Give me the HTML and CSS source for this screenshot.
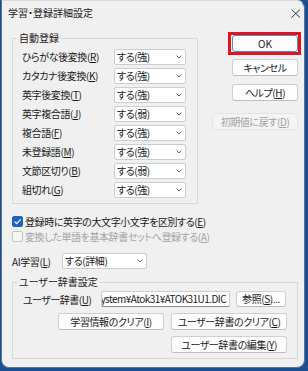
FILE: index.html
```html
<!DOCTYPE html>
<html lang="ja">
<head>
<meta charset="utf-8">
<title>学習・登録詳細設定</title>
<link rel="stylesheet" href="styles.css">
</head>
<body>
<div class="window">
  <div class="titlebar">
    <span class="title">学習・登録詳細設定</span>
    <svg class="close" width="10" height="9" viewBox="0 0 10 9"><path d="M0.5 0.5 L9 8.5 M9 0.5 L0.5 8.5" stroke="#333" stroke-width="1" fill="none"/></svg>
  </div>
  <div class="content">
    <div class="top">
      <fieldset class="group auto">
        <legend>自動登録</legend>
        <div class="rows">
          <span class="lbl">ひらがな後変換(<u>R</u>)</span>
          <div class="combo"><span>する(強)</span><svg width="6" height="4" viewBox="0 0 6 4"><path d="M0.5 0.5 L3 3 L5.5 0.5" stroke="#6a6a6a" fill="none"/></svg></div>
          <span class="lbl">カタカナ後変換(<u>K</u>)</span>
          <div class="combo"><span>する(強)</span><svg width="6" height="4" viewBox="0 0 6 4"><path d="M0.5 0.5 L3 3 L5.5 0.5" stroke="#6a6a6a" fill="none"/></svg></div>
          <span class="lbl">英字後変換(<u>T</u>)</span>
          <div class="combo"><span>する(強)</span><svg width="6" height="4" viewBox="0 0 6 4"><path d="M0.5 0.5 L3 3 L5.5 0.5" stroke="#6a6a6a" fill="none"/></svg></div>
          <span class="lbl">英字複合語(<u>J</u>)</span>
          <div class="combo"><span>する(弱)</span><svg width="6" height="4" viewBox="0 0 6 4"><path d="M0.5 0.5 L3 3 L5.5 0.5" stroke="#6a6a6a" fill="none"/></svg></div>
          <span class="lbl">複合語(<u>F</u>)</span>
          <div class="combo"><span>する(強)</span><svg width="6" height="4" viewBox="0 0 6 4"><path d="M0.5 0.5 L3 3 L5.5 0.5" stroke="#6a6a6a" fill="none"/></svg></div>
          <span class="lbl">未登録語(<u>M</u>)</span>
          <div class="combo"><span>する(強)</span><svg width="6" height="4" viewBox="0 0 6 4"><path d="M0.5 0.5 L3 3 L5.5 0.5" stroke="#6a6a6a" fill="none"/></svg></div>
          <span class="lbl">文節区切り(<u>B</u>)</span>
          <div class="combo"><span>する(弱)</span><svg width="6" height="4" viewBox="0 0 6 4"><path d="M0.5 0.5 L3 3 L5.5 0.5" stroke="#6a6a6a" fill="none"/></svg></div>
          <span class="lbl">組切れ(<u>G</u>)</span>
          <div class="combo"><span>する(強)</span><svg width="6" height="4" viewBox="0 0 6 4"><path d="M0.5 0.5 L3 3 L5.5 0.5" stroke="#6a6a6a" fill="none"/></svg></div>
        </div>
      </fieldset>
      <div class="side">
        <div class="btn default ok">OK</div>
        <div class="btn cancel">キャンセル</div>
        <div class="btn help">ヘルプ(<u>H</u>)</div>
        <div class="btn disabled init">初期値に戻す(<u>D</u>)</div>
      </div>
    </div>

    <div class="checks">
      <div class="check">
        <span class="box checked"><svg width="11" height="11" viewBox="0 0 11 11"><path d="M2.6 5.6 L4.6 7.6 L8.6 3.4" stroke="#fff" stroke-width="1.2" fill="none"/></svg></span>
        <span>登録時に英字の大文字小文字を区別する(<u>E</u>)</span>
      </div>
      <div class="check off">
        <span class="box"></span>
        <span>変換した単語を基本辞書セットへ登録する(<u>A</u>)</span>
      </div>
    </div>

    <div class="ai">
      <span class="ailbl">AI学習(<u>L</u>)</span>
      <div class="combo aicombo"><span>する(詳細)</span><svg width="6" height="4" viewBox="0 0 6 4"><path d="M0.5 0.5 L3 3 L5.5 0.5" stroke="#6a6a6a" fill="none"/></svg></div>
    </div>

    <fieldset class="group user">
      <legend>ユーザー辞書設定</legend>
      <div class="urows">
        <div class="urow">
          <span class="ulbl">ユーザー辞書(<u>U</u>)</span>
          <div class="field"><span>ystem¥Atok31¥ATOK31U1.DIC</span></div>
          <div class="btn ref">参照(<u>S</u>)...</div>
        </div>
        <div class="urow end">
          <div class="btn wide1">学習情報のクリア(<u>I</u>)</div>
          <div class="btn wide2">ユーザー辞書のクリア(<u>C</u>)</div>
        </div>
        <div class="urow end">
          <div class="btn wide2">ユーザー辞書の編集(<u>Y</u>)</div>
        </div>
      </div>
    </fieldset>
  </div>
</div>
</body>
</html>
```

FILE: styles.css
```css
* { box-sizing: border-box; }
html, body { margin: 0; padding: 0; }
body {
  width: 308px;
  height: 371px;
  overflow: hidden;
  background: #1b4f94;
  font-family: "Noto Sans CJK JP", "Noto Sans", sans-serif;
  font-size: 10px;
  letter-spacing: -0.4px;
  color: #1a1a1a;
  font-feature-settings: "palt";
}
u { text-decoration: underline; text-underline-offset: 1px; }

.window {
  margin-left: 1px;
  width: 304px;
  height: 368px;
  background: #f0f0f0;
  border: 1px solid #5d7290;
  border-top-color: #dadada;
  border-radius: 0 8px 8px 8px;
  overflow: hidden;
}

.titlebar {
  height: 24px;
  display: flex;
  align-items: center;
  justify-content: space-between;
  padding: 0 3px 0 6px;
  line-height: 12px;
}
.title { letter-spacing: 0; }
.close { display: block; }

.content { padding: 7px 6px 0 10px; }

.top { display: flex; justify-content: space-between; align-items: flex-start; }

fieldset.group {
  margin: 0;
  padding: 0;
  min-width: 0;
  border: 1px solid #d8d8d8;
}
fieldset.group legend {
  margin-left: 4px;
  padding: 0 2px;
  line-height: 12px;
  letter-spacing: 0;
}
fieldset.auto { width: 186px; }

.rows {
  display: grid;
  grid-template-columns: 1fr 72px;
  row-gap: 3px;
  align-items: center;
  padding: 5px 11px 5px 9px;
}
.lbl { white-space: nowrap; line-height: 16px; }

.combo {
  height: 16px;
  background: #fff;
  border: 1px solid #cdcdcd;
  border-radius: 2px;
  display: flex;
  align-items: center;
  justify-content: space-between;
  padding: 0 3px 0 2px;
  line-height: 14px;
  white-space: nowrap;
}
.combo svg { display: block; flex: none; }

.side {
  width: 86px;
  display: flex;
  flex-direction: column;
  align-items: flex-end;
}
.btn {
  height: 17px;
  background: #fdfdfd;
  border: 1px solid #d0d0d0;
  border-bottom-color: #bdbdbd;
  border-radius: 3px;
  display: flex;
  align-items: center;
  justify-content: center;
  line-height: 14px;
  white-space: nowrap;
  flex: none;
}
.side .btn { width: 66px; }
.ok { margin-top: 3px; letter-spacing: 0; }
.cancel { margin-top: 7px; }
.help { margin-top: 8px; }
.side .init { margin-top: 12px; width: 86px; }
.default { position: relative; border-color: #4d8bd6; }
.default::after {
  content: "";
  position: absolute;
  left: -5px;
  right: -4px;
  top: -4px;
  bottom: -4px;
  border: 3px solid #e3141d;
}
.disabled {
  background: #f4f4f4;
  border-color: #e4e4e4;
  color: #a2a2a2;
}

.checks { margin-top: 10px; }
.check {
  display: flex;
  align-items: center;
  height: 15px;
  gap: 2px;
  white-space: nowrap;
}
.box {
  width: 11px;
  height: 11px;
  border-radius: 2px;
  border: 1px solid #c4c4c4;
  background: #f6f6f6;
  flex: none;
}
.box.checked { background: #1866c2; border-color: #1866c2; }
.box.checked svg { display: block; margin: -1px; }
.off { color: #a4a4a4; }

.ai {
  margin-top: 9px;
  display: flex;
  align-items: center;
  height: 16px;
}
.ailbl { width: 50px; white-space: nowrap; }
.aicombo { width: 85px; }

fieldset.user { margin-top: 7px; width: 286px; }
.urows {
  padding: 3px 10px 5px 10px;
  display: flex;
  flex-direction: column;
  gap: 6px;
}
.urow { display: flex; align-items: center; }
.urow.end { justify-content: flex-end; gap: 7px; }
.ulbl { width: 78px; flex: none; white-space: nowrap; letter-spacing: -0.5px; }
.field {
  width: 129px;
  flex: none;
  height: 16px;
  background: #fff;
  border: 1px solid #cdcdcd;
  border-bottom-color: #8a8a8a;
  border-radius: 2px;
  overflow: hidden;
  display: flex;
  justify-content: flex-end;
  align-items: center;
  padding-right: 3px;
  white-space: nowrap;
  line-height: 14px;
  letter-spacing: -0.55px;
}
.ref { width: 50px; height: 16px; margin-left: 6px; }
.wide1 { width: 106px; }
.wide2 { width: 116px; }
```
